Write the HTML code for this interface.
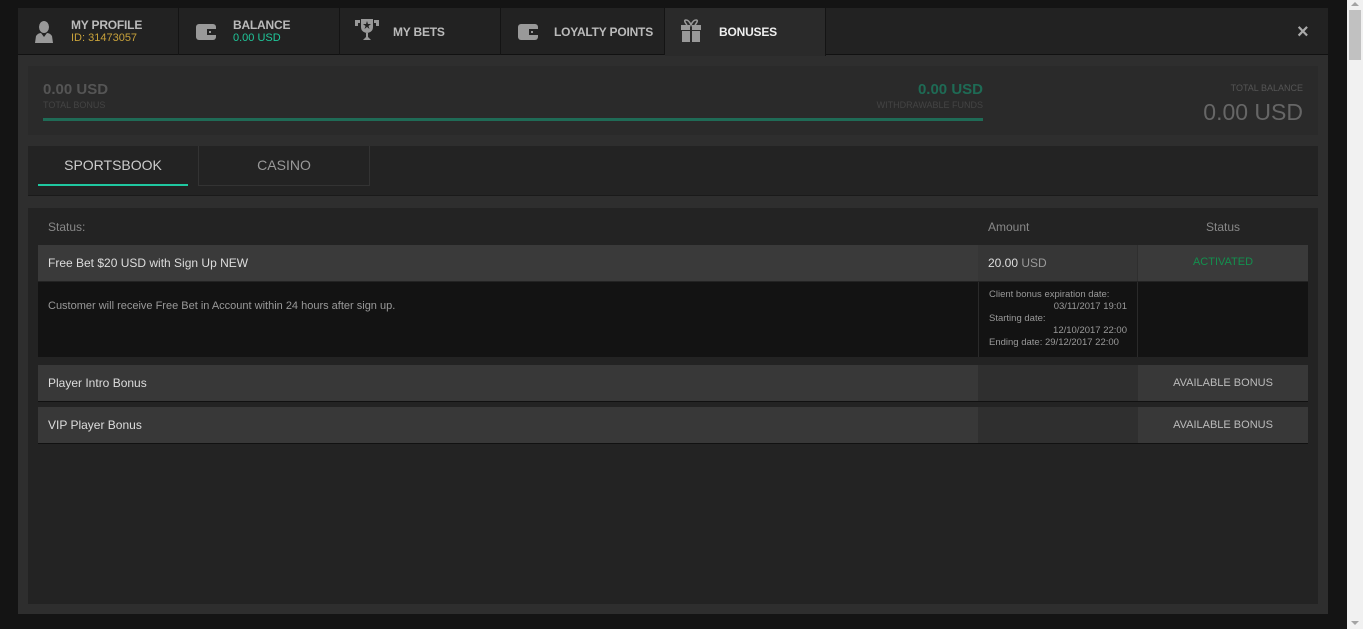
<!DOCTYPE html>
<html><head><meta charset="utf-8"><style>
*{margin:0;padding:0;box-sizing:border-box}
body{width:1363px;height:629px;background:#141414;font-family:"Liberation Sans",sans-serif;overflow:hidden;position:relative}
.abs{position:absolute}
.modal{left:18px;top:8px;width:1310px;height:606px;background:#2e2e2e}
.hdr{left:0;top:0;width:1310px;height:47px;background:#222;border-bottom:1px solid #111}
.tab{top:0;height:47px;border-right:1px solid #141414}
.tab .t{position:absolute;font-weight:bold;font-size:12px;color:#bbb;letter-spacing:-0.2px}
.tab .s{position:absolute;font-size:11px}
.ic{position:absolute;left:16px;top:12px}
.sum{left:10px;top:58px;width:1290px;height:69px;background:#2a2a2a}
.pan{background:#232323}
.row{position:absolute;left:10px;width:1270px;height:37px;background:#383838;border-bottom:1px solid #111}
.row .n{position:absolute;left:10px;top:11px;font-size:12px;color:#ddd}
.row .m{position:absolute;left:940px;top:0;width:160px;height:36px;background:#2f2f2f}
.row .a{position:absolute;left:1100px;width:170px;top:12px;text-align:center;font-size:11px;color:#bbb}
</style></head><body>
<div class="abs modal">
 <div class="abs hdr">
  <div class="abs tab" style="left:0;width:161px">
   <svg class="ic" width="20" height="24" viewBox="0 0 20 24"><ellipse cx="10" cy="7" rx="5" ry="6" fill="#999"/><path d="M1 23 L2 16 Q4 13 7 13 L10 17 L13 13 Q16 13 18 16 L19 23 Z" fill="#999"/></svg>
   <div class="t" style="left:53px;top:10px">MY PROFILE</div><div class="s" style="left:53px;top:24px;color:#c8a23a">ID: 31473057</div></div>
  <div class="abs tab" style="left:161px;width:161px">
   <svg class="ic" width="22" height="20" viewBox="0 0 22 20" style="top:14px"><rect x="1" y="2" width="20" height="16" rx="3" fill="#999"/><rect x="12" y="7" width="9" height="6" fill="#222"/><rect x="14" y="9" width="2" height="2" fill="#999"/></svg>
   <div class="t" style="left:54px;top:10px">BALANCE</div><div class="s" style="left:54px;top:24px;color:#1fc79a">0.00 USD</div></div>
  <div class="abs tab" style="left:322px;width:161px">
   <svg class="ic" width="28" height="24" viewBox="0 0 28 24" style="left:13px;top:9px"><path d="M8 2H20V10Q20 15 14 16Q8 15 8 10Z" fill="#999"/><path d="M2 3H7V6H5V9H2ZM26 3H21V6H23V9H26Z" fill="#999"/><rect x="13" y="16" width="2" height="4" fill="#999"/><path d="M10 23L14 19L18 23Z" fill="#999"/><path d="M14 4L15 7H18L15.5 9L16.5 12L14 10L11.5 12L12.5 9L10 7H13Z" fill="#222"/></svg>
   <div class="t" style="left:53px;top:17px">MY BETS</div></div>
  <div class="abs tab" style="left:483px;width:164px">
   <svg class="ic" width="22" height="20" viewBox="0 0 22 20" style="top:14px"><rect x="1" y="2" width="20" height="16" rx="3" fill="#999"/><rect x="12" y="7" width="9" height="6" fill="#222"/><rect x="14" y="9" width="2" height="2" fill="#999"/></svg>
   <div class="t" style="left:53px;top:17px">LOYALTY POINTS</div></div>
  <div class="abs tab" style="left:647px;width:161px;height:48px;background:#2a2a2a">
   <svg class="ic" width="22" height="24" viewBox="0 0 22 24" style="left:15px;top:11px"><path d="M7 6Q3 1 6 1Q9 1 11 6Q13 1 16 1Q19 1 15 6" stroke="#999" stroke-width="1.6" fill="none"/><rect x="1" y="6" width="9" height="5" fill="#999"/><rect x="12" y="6" width="9" height="5" fill="#999"/><rect x="2" y="12" width="8" height="11" fill="#999"/><rect x="12" y="12" width="8" height="11" fill="#999"/></svg>
   <div class="t" style="left:54px;top:17px;color:#eee">BONUSES</div></div>
  <div class="abs" style="left:1279px;top:13px;color:#aaa;font-size:20px;font-weight:bold">×</div>
 </div>
 <div class="abs sum">
  <div class="abs" style="left:15px;top:15px;font-size:15px;font-weight:bold;color:#555">0.00 USD</div>
  <div class="abs" style="left:15px;top:34px;font-size:9px;color:#444">TOTAL BONUS</div>
  <div class="abs" style="left:835px;top:15px;width:120px;text-align:right;font-size:15px;font-weight:bold;color:#1e6b55">0.00 USD</div>
  <div class="abs" style="left:835px;top:34px;width:120px;text-align:right;font-size:9px;color:#444">WITHDRAWABLE FUNDS</div>
  <div class="abs" style="left:15px;top:52px;width:940px;height:3px;background:#1f6b56"></div>
  <div class="abs" style="left:1120px;top:17px;width:155px;text-align:right;font-size:9px;color:#555">TOTAL BALANCE</div>
  <div class="abs" style="left:1100px;top:33px;width:175px;text-align:right;font-size:23px;color:#666">0.00 USD</div>
 </div>
 <div class="abs pan" style="left:10px;top:138px;width:1290px;height:50px;border-bottom:1px solid #1a1a1a">
  <div class="abs" style="left:10px;top:0;width:150px;height:40px;text-align:center;line-height:38px;font-size:14px;color:#ccc;border-bottom:2px solid #1fc7a0">SPORTSBOOK</div>
  <div class="abs" style="left:170px;top:0;width:172px;height:40px;text-align:center;line-height:38px;font-size:14px;color:#999;border:1px solid #333;border-top:none">CASINO</div>
 </div>
 <div class="abs pan" style="left:10px;top:200px;width:1290px;height:396px">
  <div class="abs" style="left:20px;top:12px;font-size:12px;color:#888">Status:</div>
  <div class="abs" style="left:960px;top:12px;font-size:12px;color:#888">Amount</div>
  <div class="abs" style="left:1110px;width:170px;top:12px;text-align:center;font-size:12px;color:#888">Status</div>
  <div class="row" style="top:37px;height:36px;border:none;background:#3a3a3a"><div class="n">Free Bet $20 USD with Sign Up NEW</div>
   <div class="m" style="background:#363636;border-right:1px solid #2f2f2f"><span style="position:absolute;left:10px;top:11px;font-size:12px;color:#ddd">20.00 <span style="color:#999">USD</span></span></div>
   <div class="a" style="color:#13904e;top:11px">ACTIVATED</div></div>
  <div class="abs" style="left:10px;top:74px;width:1270px;height:75px;background:#131313">
   <div class="abs" style="left:10px;top:18px;font-size:11px;color:#999">Customer will receive Free Bet in Account within 24 hours after sign up.</div>
   <div class="abs" style="left:940px;top:0;width:160px;height:75px;border-left:1px solid #2a2a2a;border-right:1px solid #2a2a2a;font-size:9.5px;color:#999;line-height:12px;padding:7px 10px 0 10px">Client bonus expiration date:<div style="text-align:right">03/11/2017 19:01</div>Starting date:<div style="text-align:right">12/10/2017 22:00</div>Ending date: 29/12/2017 22:00</div>
  </div>
  <div class="row" style="top:157px"><div class="n">Player Intro Bonus</div><div class="m"></div><div class="a">AVAILABLE BONUS</div></div>
  <div class="row" style="top:199px"><div class="n">VIP Player Bonus</div><div class="m"></div><div class="a">AVAILABLE BONUS</div></div>
 </div>
</div>
<div class="abs" style="left:1347px;top:0;width:16px;height:629px;background:#f1f1f1">
 <div class="abs" style="left:2px;top:10px;width:12px;height:50px;background:#c1c1c1"></div>
 <div class="abs" style="left:4px;top:2px;width:0;height:0;border-left:4px solid transparent;border-right:4px solid transparent;border-bottom:4px solid #a3a3a3"></div>
 <div class="abs" style="left:4px;top:621px;width:0;height:0;border-left:4px solid transparent;border-right:4px solid transparent;border-top:4px solid #a3a3a3"></div>
</div>
</body></html>
